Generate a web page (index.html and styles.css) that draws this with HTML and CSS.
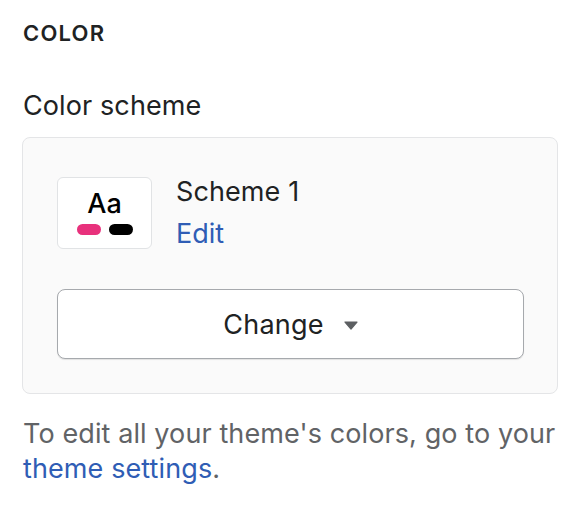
FILE: index.html
```html
<!DOCTYPE html>
<html>
<head>
<meta charset="utf-8">
<link rel="stylesheet" href="styles.css">
</head>
<body>
<div class="panel">
  <h2 class="heading">COLOR</h2>
  <div class="label">Color scheme</div>
  <div class="card">
    <div class="scheme">
      <div class="swatch">
        <span class="aa">Aa</span>
        <span class="pills"><span class="pill pink"></span><span class="pill black"></span></span>
      </div>
      <div class="info">
        <div class="name">Scheme 1</div>
        <a class="link" href="#">Edit</a>
      </div>
    </div>
    <button class="change">Change <svg class="caret" width="14" height="9" viewBox="0 0 14 9"><path d="M1 1h12L7 8z" fill="#5c5f62" stroke="#5c5f62" stroke-linejoin="round" stroke-width="1.2"/></svg></button>
  </div>
  <p class="help">To edit all your theme's colors, go to your <a class="link" href="#">theme settings</a>.</p>
</div>
</body>
</html>
```
FILE: styles.css
```css
* { box-sizing: border-box; }
html, body { margin: 0; padding: 0; background: #ffffff; }
body {
  font-family: Inter, "Noto Sans", "Liberation Sans", sans-serif;
  color: #202223;
  -webkit-font-smoothing: antialiased;
}
.panel {
  padding: 19px 21px 0 23px;
}
.heading {
  margin: 0;
  font-size: 22px;
  font-weight: 600;
  line-height: 28px;
  letter-spacing: 1.2px;
  color: #202223;
}
.label {
  margin-top: 43px;
  font-size: 27px;
  line-height: 32px;
  letter-spacing: 0.1px;
  color: #202223;
}
.card {
  margin-top: 15px;
  margin-left: -1px;
  width: 536px;
  background: #fafafa;
  border: 1.5px solid #e4e5e7;
  border-radius: 8px;
  padding: 39px 33px 34px 34px;
}
.scheme {
  display: flex;
  align-items: flex-start;
  gap: 24px;
}
.swatch {
  width: 95px;
  height: 72px;
  background: #ffffff;
  border: 1.5px solid #e1e3e5;
  border-radius: 6px;
  display: flex;
  flex-direction: column;
  align-items: center;
  padding-top: 11px;
}
.aa {
  font-size: 27px;
  line-height: 30px;
  color: #000;
  font-weight: 500;
}
.pills {
  display: flex;
  gap: 8px;
  margin-top: 5px;
}
.pill {
  width: 24px;
  height: 11px;
  border-radius: 6px;
}
.pink { background: #e8317c; }
.black { background: #000000; }
.info {
  display: flex;
  flex-direction: column;
}
.name {
  font-size: 27px;
  line-height: 30px;
  letter-spacing: 0.1px;
  color: #202223;
}
.link {
  color: #2f5db5;
  text-decoration: none;
}
.info .link {
  font-size: 27px;
  line-height: 30px;
  margin-top: 12px;
}
.change {
  margin-top: 40px;
  width: 467px;
  height: 70px;
  background: #ffffff;
  border: 1.5px solid #a6a9ad;
  border-radius: 8px;
  box-shadow: 0 1px 1px rgba(0,0,0,0.1);
  font-family: inherit;
  font-size: 27px;
  letter-spacing: 0.2px;
  color: #202223;
  display: flex;
  align-items: center;
  justify-content: center;
  gap: 20px;
  padding: 0;
}
.caret { display: block; margin-top: 2px; }
.help {
  margin: 22px 0 0;
  font-size: 27px;
  line-height: 35px;
  letter-spacing: 0.1px;
  color: #616366;
}
.help .link { color: #2f5db5; }
```
